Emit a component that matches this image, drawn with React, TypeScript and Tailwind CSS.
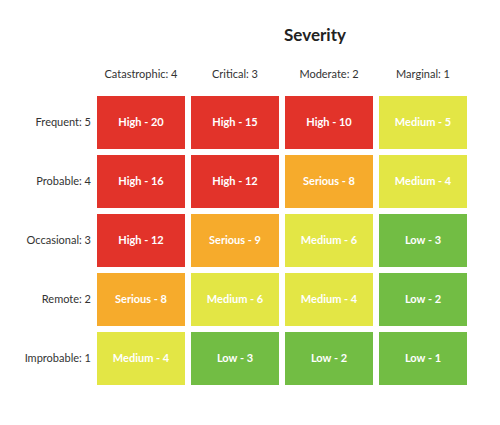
import { Fragment } from "react";

const cols = ["Catastrophic: 4", "Critical: 3", "Moderate: 2", "Marginal: 1"];

const colors: Record<string, string> = {
  High: "bg-[#e2332a]",
  Serious: "bg-[#f6ab2c]",
  Medium: "bg-[#e3e645]",
  Low: "bg-[#72bd44]",
};

const rows: { label: string; cells: [string, number][] }[] = [
  { label: "Frequent: 5", cells: [["High", 20], ["High", 15], ["High", 10], ["Medium", 5]] },
  { label: "Probable: 4", cells: [["High", 16], ["High", 12], ["Serious", 8], ["Medium", 4]] },
  { label: "Occasional: 3", cells: [["High", 12], ["Serious", 9], ["Medium", 6], ["Low", 3]] },
  { label: "Remote: 2", cells: [["Serious", 8], ["Medium", 6], ["Medium", 4], ["Low", 2]] },
  { label: "Improbable: 1", cells: [["Medium", 4], ["Low", 3], ["Low", 2], ["Low", 1]] },
];

export default function App() {
  return (
    <div className="w-[500px] h-[425px] bg-white font-['Lato','Liberation_Sans',sans-serif] text-[#333]">
      <div className="pt-[25px] pl-[130px] text-center text-[17px] leading-[20px] font-bold text-[#222]">Severity</div>
      <div className="mt-[19px] grid grid-cols-[91px_repeat(4,88px)] grid-rows-[26px_repeat(5,53px)] gap-x-[6px] gap-y-[6px]">
        <div />
        {cols.map((c) => (
          <div key={c} className="text-center text-[11px] leading-[20px]">
            {c}
          </div>
        ))}
        {rows.map((r) => (
          <Fragment key={r.label}>
            <div className="flex items-center justify-end text-[11px]">{r.label}</div>
            {r.cells.map(([level, n], i) => (
              <div
                key={i}
                className={`${colors[level]} flex items-center justify-center text-[11px] font-bold text-white`}
              >
                {level} - {n}
              </div>
            ))}
          </Fragment>
        ))}
      </div>
    </div>
  );
}
